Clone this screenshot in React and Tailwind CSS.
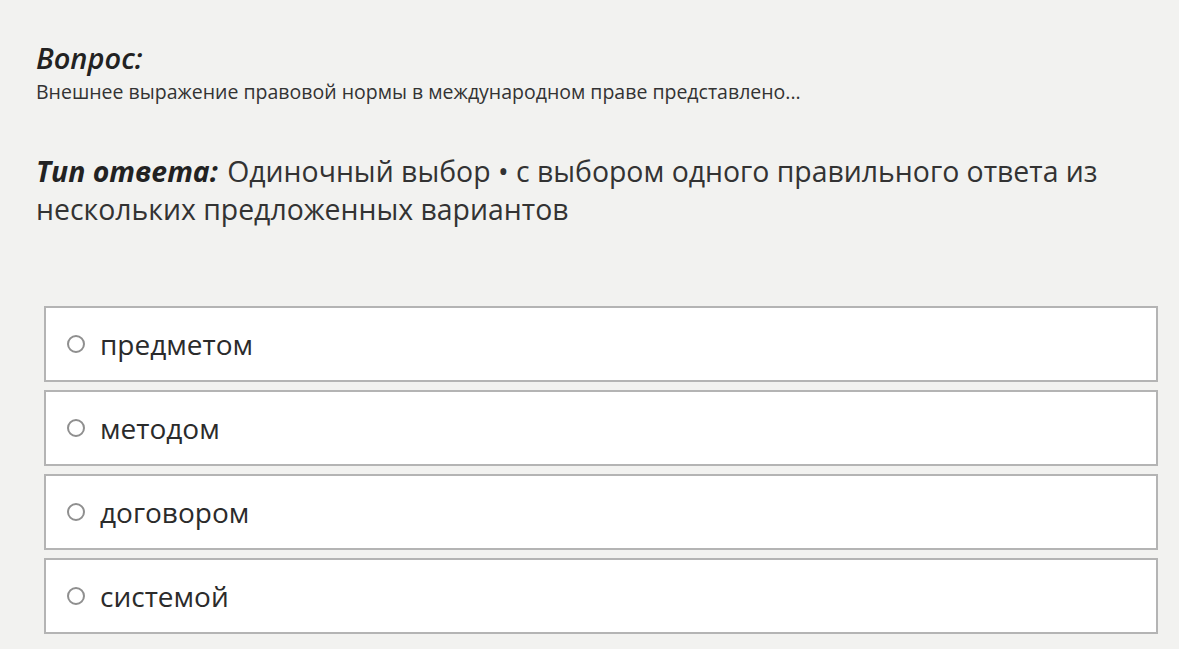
const options = ["предметом", "методом", "договором", "системой"];

export default function App() {
  return (
    <div
      className="min-h-screen w-full bg-[#f2f2f0] text-[#2b2b2b] overflow-hidden"
      style={{ fontFamily: '"Open Sans", "Noto Sans", sans-serif' }}
    >
      <div className="pl-[36px] pr-[21px] pt-[38px]">
        {/* Question */}
        <div className="text-[29px] leading-[40px] font-semibold italic text-[#222]">Вопрос:</div>
        <div className="text-[19.5px] leading-[24px] text-[#333] mt-[2px]">
          Внешнее выражение правовой нормы в международном праве представлено...
        </div>

        {/* Answer type */}
        <div className="mt-[48px] text-[28.4px] leading-[38px] text-[#333]">
          <span className="font-bold italic text-[#222] mr-[2px]">Тип ответа:</span>{" "}
          Одиночный выбор • с выбором одного правильного ответа из нескольких предложенных вариантов
        </div>

        {/* Options */}
        <div className="mt-[78px] ml-[8px] flex flex-col gap-[8px]">
          {options.map((o) => (
            <div
              key={o}
              className="h-[76px] bg-white border-2 border-[#b4b4b4] flex items-center pl-[21px]"
            >
              <span className="w-[18px] h-[18px] rounded-full border-2 border-[#8f8f8f] shrink-0" />
              <span className="ml-[15px] text-[28px] text-[#2b2b2b]">{o}</span>
            </div>
          ))}
        </div>
      </div>
    </div>
  );
}
